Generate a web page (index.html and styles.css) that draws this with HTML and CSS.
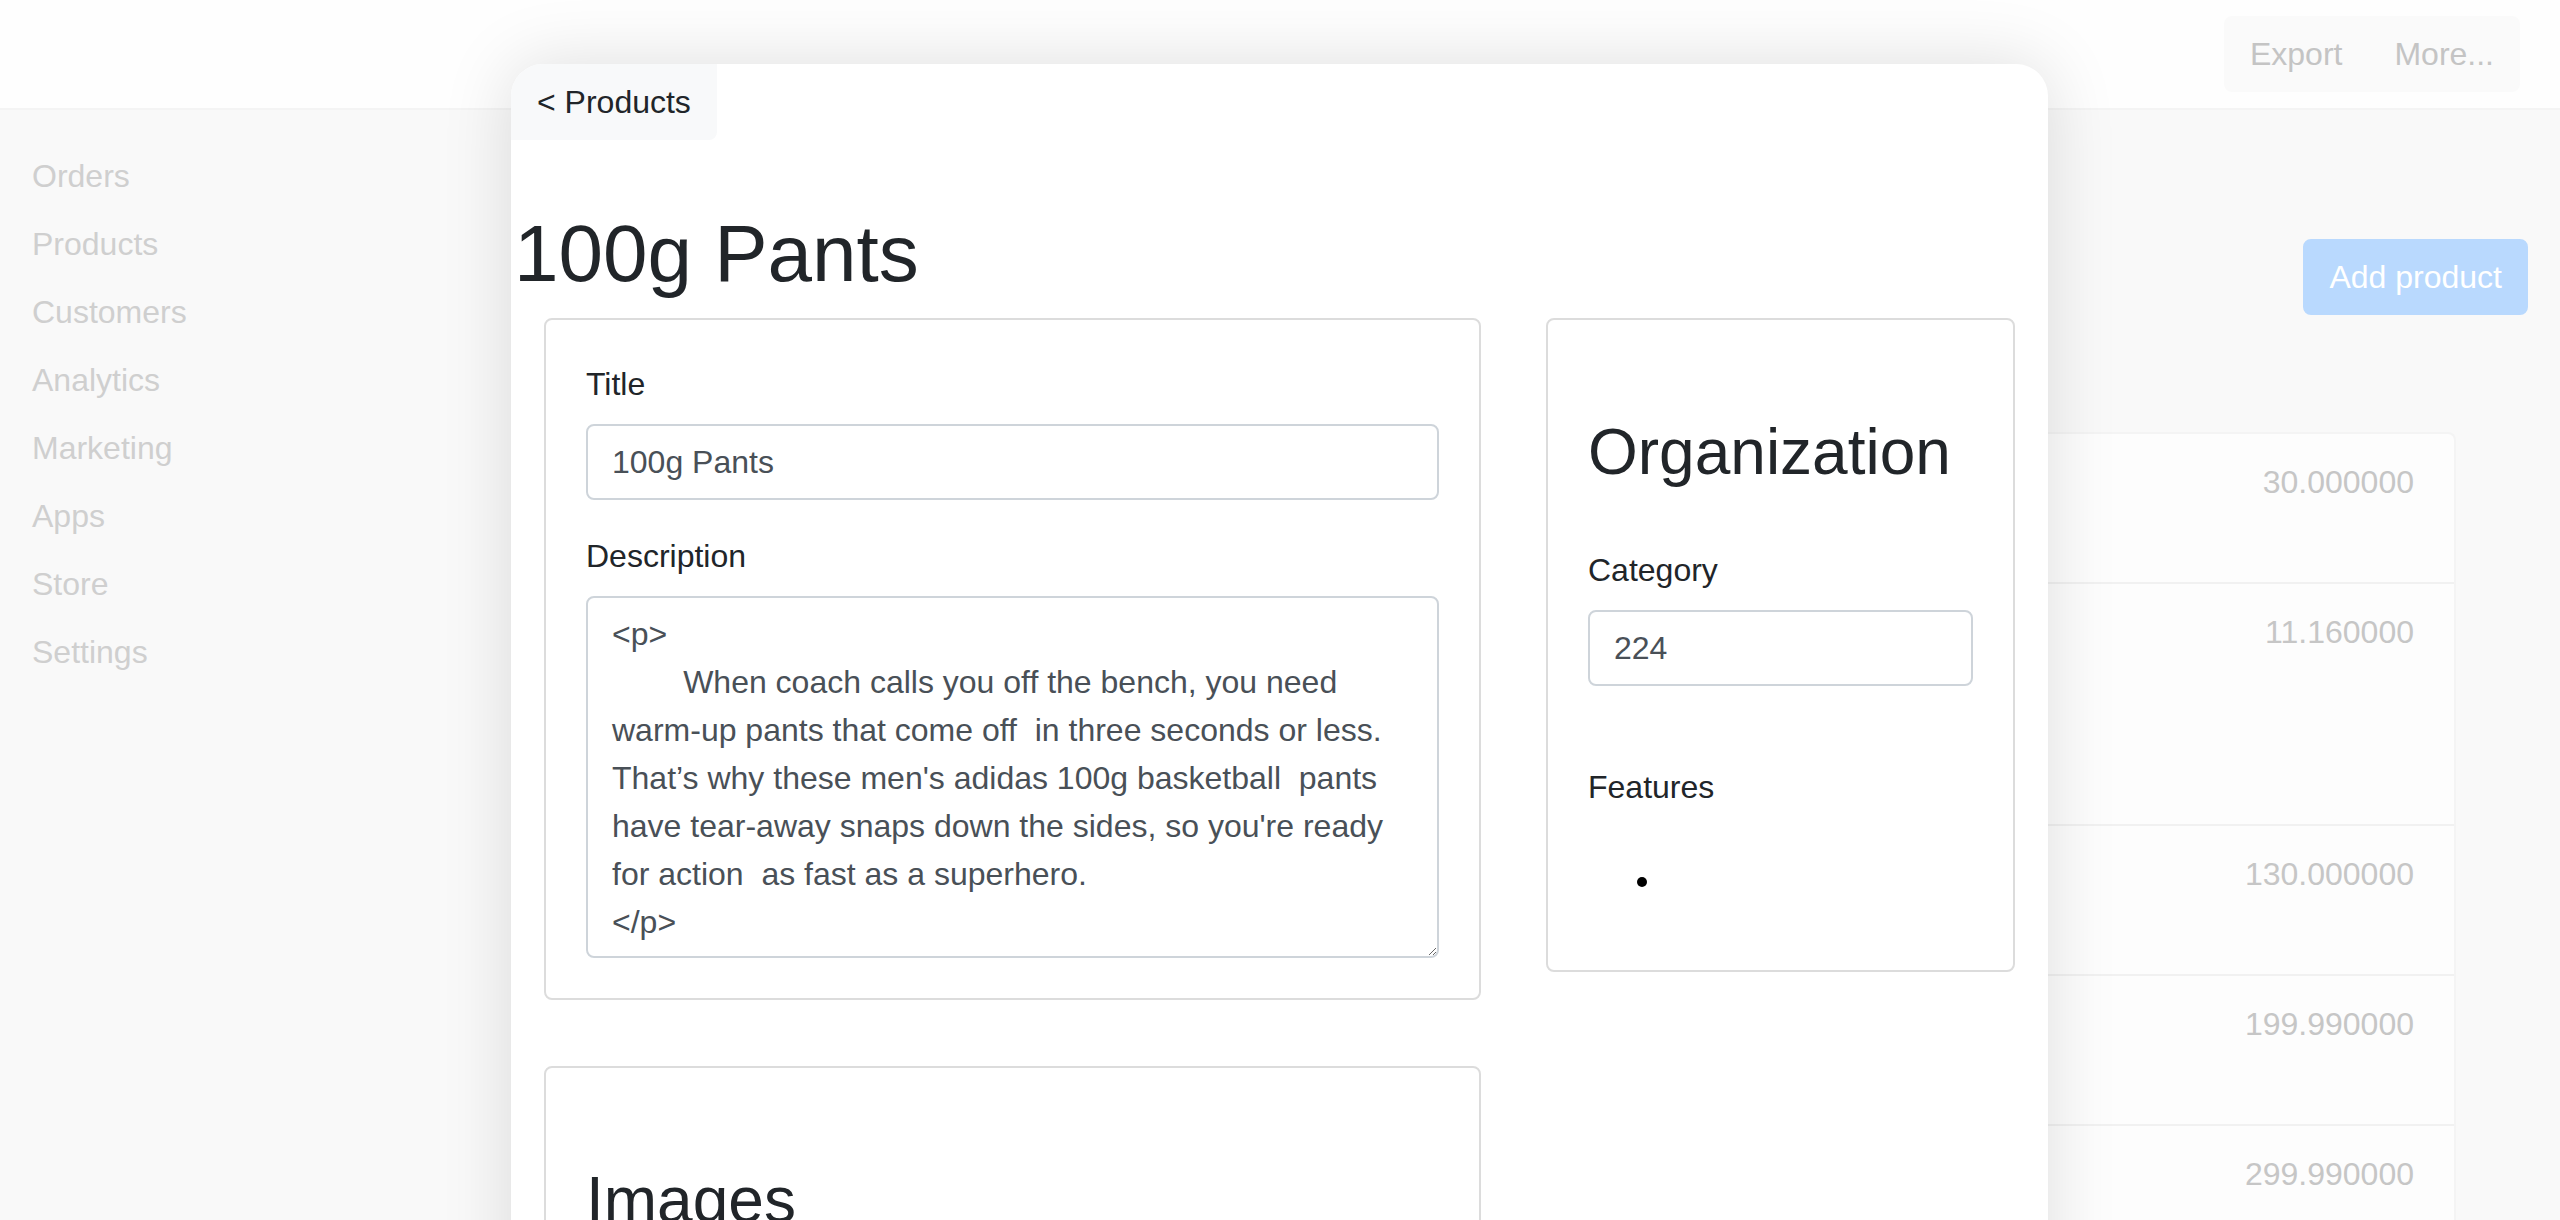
FILE: index.html
```html
<!DOCTYPE html>
<html lang="en">
<head>
<meta charset="utf-8">
<title>100g Pants</title>
<link rel="stylesheet" href="styles.css">
</head>
<body>
<div class="app">
  <header class="topbar">
    <div class="btn-group">
      <button class="btn-ghost">Export</button>
      <button class="btn-ghost">More...</button>
    </div>
  </header>
  <div class="layout">
    <nav class="sidebar">
      <a class="nav-link">Orders</a>
      <a class="nav-link">Products</a>
      <a class="nav-link">Customers</a>
      <a class="nav-link">Analytics</a>
      <a class="nav-link">Marketing</a>
      <a class="nav-link">Apps</a>
      <a class="nav-link">Store</a>
      <a class="nav-link">Settings</a>
    </nav>
    <main class="main">
      <div class="main-head">
        <button class="btn-add">Add product</button>
      </div>
      <div class="table">
        <div class="row"><span class="price">30.000000</span></div>
        <div class="row row-tall"><span class="price">11.160000</span></div>
        <div class="row"><span class="price">130.000000</span></div>
        <div class="row"><span class="price">199.990000</span></div>
        <div class="row"><span class="price">299.990000</span></div>
      </div>
    </main>
  </div>
</div>

<div class="modal">
  <button class="back-btn">&lt; Products</button>
  <h1 class="product-title">100g Pants</h1>
  <div class="grid">
    <section class="card">
      <div class="card-body">
        <div class="form-group">
          <label class="label">Title</label>
          <input class="input" type="text" value="100g Pants">
        </div>
        <div class="form-group last">
          <label class="label">Description</label>
          <textarea class="input textarea">&lt;p&gt;
	When coach calls you off the bench, you need
warm-up pants that come off  in three seconds or less.
That’s why these men's adidas 100g basketball  pants
have tear-away snaps down the sides, so you're ready
for action  as fast as a superhero.
&lt;/p&gt;</textarea>
        </div>
      </div>
    </section>
    <section class="card">
      <div class="card-body">
        <h2 class="card-heading">Organization</h2>
        <div class="form-group org">
          <label class="label">Category</label>
          <input class="input" type="text" value="224">
        </div>
        <label class="label">Features</label>
        <ul class="features"><li></li></ul>
      </div>
    </section>
    <section class="card">
      <div class="card-body">
        <h2 class="card-heading">Images</h2>
      </div>
    </section>
  </div>
</div>
</body>
</html>
```
FILE: styles.css
```css
* { box-sizing: border-box; }

html, body {
  margin: 0;
  padding: 0;
  width: 2560px;
  height: 1220px;
  overflow: hidden;
}

body {
  font-family: "Liberation Sans", Helvetica, Arial, sans-serif;
  font-size: 32px;
  line-height: 48px;
  color: #212529;
  background: #f9f9f9;
  position: relative;
}

button, input, textarea {
  font-family: inherit;
  font-size: 32px;
  line-height: 48px;
}

/* ---------- background page (dimmed) ---------- */
.app {
  width: 2560px;
  height: 1220px;
  display: flex;
  flex-direction: column;
}

.topbar {
  height: 110px;
  background: #fefefe;
  border-bottom: 2px solid #f4f4f4;
  display: flex;
  justify-content: flex-end;
  align-items: center;
  padding-right: 40px;
  flex: none;
}

.btn-group { display: flex; }

.btn-ghost {
  background: #fafafa;
  border: 2px solid #fafafa;
  color: #c4c4c4;
  padding: 12px 24px;
  margin: 0;
}
.btn-ghost:first-child { border-radius: 8px 0 0 8px; }
.btn-ghost:last-child { border-radius: 0 8px 8px 0; }

.layout {
  flex: 1;
  display: flex;
}

.sidebar {
  width: 420px;
  padding-top: 32px;
  display: flex;
  flex-direction: column;
  flex: none;
}

.nav-link {
  display: block;
  padding: 10px 32px;
  color: #cfcfcf;
}

.main {
  flex: 1;
  padding: 129px 32px 0 180px;
}

.main-head {
  display: flex;
  justify-content: flex-end;
  margin-bottom: 117px;
}

.btn-add {
  background: #b9d9fe;
  border: 2px solid #b9d9fe;
  color: #ffffff;
  border-radius: 8px;
  padding: 12px 24px;
}

.table {
  margin-right: 72px;
  background: #fdfdfd;
  border: 2px solid #f4f4f4;
  border-bottom: none;
  border-radius: 8px 8px 0 0;
}

.row {
  height: 150px;
  padding: 24px 40px;
  border-bottom: 2px solid #f1f1f1;
  display: flex;
  justify-content: flex-end;
  align-items: flex-start;
}
.row-tall { height: 242px; }

.price { color: #c6c6c6; }

/* ---------- modal ---------- */
.modal {
  position: absolute;
  left: 511px;
  top: 64px;
  width: 1537px;
  height: 1300px;
  background: #ffffff;
  border-radius: 32px 32px 0 0;
  overflow: hidden;
  box-shadow: 0 0 70px rgba(0, 0, 0, 0.13);
}

.back-btn {
  display: block;
  background: #f8f9fa;
  border: 2px solid #f8f9fa;
  color: #212529;
  padding: 12px 24px;
  margin: 0;
  border-radius: 0 0 8px 0;
}

.product-title {
  font-size: 80px;
  line-height: 96px;
  font-weight: 500;
  margin: 66px 0 16px 3px;
  color: #212529;
}

.grid {
  display: grid;
  grid-template-columns: 937px 469px;
  column-gap: 65px;
  row-gap: 66px;
  padding-left: 33px;
  align-items: start;
}

.card {
  border: 2px solid #dcdcdc;
  border-radius: 8px;
  background: #ffffff;
}

.card-body { padding: 40px; }

.form-group { margin-bottom: 32px; }
.form-group.last { margin-bottom: 0; }
.form-group.org { margin-bottom: 77px; }

.label {
  display: block;
  margin-bottom: 16px;
  color: #212529;
}

.input {
  display: block;
  width: 100%;
  height: 76px;
  padding: 12px 24px;
  border: 2px solid #ced4da;
  border-radius: 8px;
  color: #495057;
  background: #ffffff;
  margin: 0;
}

.textarea {
  height: 362px;
  white-space: pre;
  overflow: hidden;
  tab-size: 8;
  resize: both;
}

.card-heading {
  font-size: 64px;
  line-height: 77px;
  font-weight: 500;
  margin: 54px 0 55px 0;
  color: #212529;
}

.features {
  margin: 45px 0 26px 0;
  padding-left: 75px;
  color: #000000;
}
.features li { height: 48px; }
```
